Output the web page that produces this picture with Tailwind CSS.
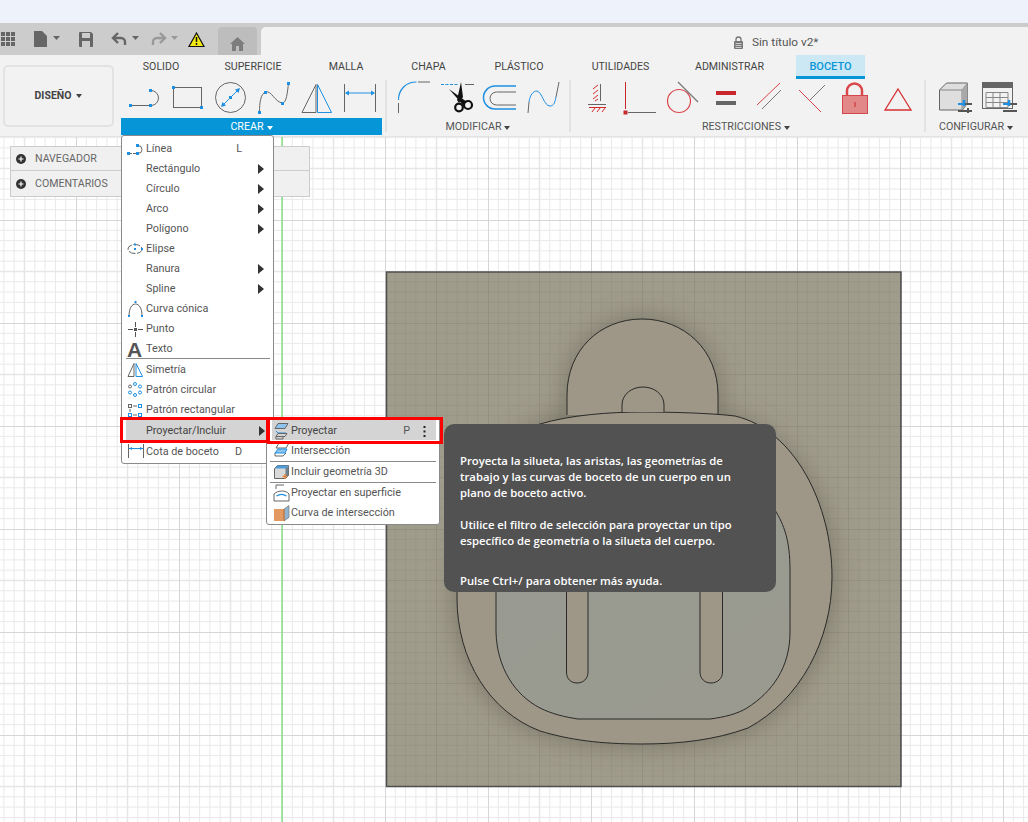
<!doctype html>
<html lang="es">
<head>
<meta charset="utf-8">
<script src="https://cdn.jsdelivr.net/npm/@tailwindcss/browser@4"></script>
</head>
<body>
<div class="relative flex h-[822px] w-[1028px] flex-col overflow-hidden bg-white font-['Roboto',sans-serif] text-[#444]">
  <div class="h-[23px] bg-[#eef2fb]"></div>
  <div class="h-[4px] bg-[#cccccc]"></div>

  <!-- title bar -->
  <div class="flex h-[28px] bg-[#cccccc]">
    <svg class="h-[28px] w-[218px]" viewBox="0 27 218 28">
      <g fill="#666">
        <rect x="1" y="32" width="4" height="4"/><rect x="6" y="32" width="4" height="4"/><rect x="11" y="32" width="4" height="4"/>
        <rect x="1" y="37" width="4" height="4"/><rect x="6" y="37" width="4" height="4"/><rect x="11" y="37" width="4" height="4"/>
        <rect x="1" y="42" width="4" height="4"/><rect x="6" y="42" width="4" height="4"/><rect x="11" y="42" width="4" height="4"/>
        <path d="M34 31h8l5 5v11H34z"/>
        <path d="M53 36h7l-3.500 4zM132 36h7l-3.500 4z"/>
        <path d="M79 33a1 1 0 0 1 1-1h11l2 2v12a1 1 0 0 1-1 1H80a1 1 0 0 1-1-1zM82 33v5h8v-5zM82 41v6h8v-6z" fill-rule="evenodd"/>
      </g>
      <path d="M114 38h7a4 4 0 0 1 4 4v3M118 33l-5 5 5 5" fill="none" stroke="#666" stroke-width="2.400"/>
      <path d="M164 38h-7a4 4 0 0 0-4 4v3M160 33l5 5-5 5" fill="none" stroke="#999" stroke-width="2.400"/>
      <path d="M171 36h7l-3.500 4z" fill="#999"/>
      <path d="M196.500 33 204 46.500h-15z" fill="#f4ea12" stroke="#111" stroke-width="1.200"/>
      <path d="M196.500 37v5M196.500 43v2" stroke="#111" stroke-width="1.500"/>
    </svg>
    <div class="flex h-[28px] w-[39px] items-center justify-center rounded-t-[4px] bg-[#bdbdbd]">
      <svg class="mt-[5px] h-[14px] w-[15px]" viewBox="0 0 15 14"><path d="M7.500 0 15 7h-2v7H9V9H6v5H2V7H0z" fill="#7d7d7d"/></svg>
    </div>
    <div class="ml-[4px] flex flex-1 items-center gap-[9px] rounded-tl-[5px] bg-[#f2f2f2] pl-[473px] pt-[2px]">
      <svg class="h-[13px] w-[9px]" viewBox="0 0 9 13"><path d="M2 6V3.500a2.500 2.500 0 0 1 5 0V6" fill="none" stroke="#777" stroke-width="1.300"/><rect y="5" width="9" height="8" rx="1" fill="#777"/><path d="M1.500 7.500h6M1.500 9.500h6M1.500 11.500h6" stroke="#f2f2f2" stroke-width=".7"/></svg>
      <span class="pt-[1px] text-[11.800px] leading-none text-[#555]">Sin título v2*</span>
    </div>
  </div>

  <!-- toolbar -->
  <div class="flex h-[82px] border-b border-[#e4e4e4] bg-[#f2f2f2]">
    <div class="ml-[3px] mt-[10px] flex h-[62px] w-[111px] items-center justify-center gap-[5px] rounded-[5px] border-2 border-[#e2e2e2] text-[10.500px] font-bold text-[#444]">
      DISEÑO
      <svg class="h-[4px] w-[6px]" viewBox="0 0 6 4"><path d="M0 0h6L3 4z" fill="#444"/></svg>
    </div>
    <div class="ml-[7px] flex flex-1 flex-col">
      <div class="flex h-[24px] text-[10.600px] text-[#444]">
        <div class="flex w-[80px] items-center justify-center">SOLIDO</div>
        <div class="flex w-[104px] items-center justify-center">SUPERFICIE</div>
        <div class="flex w-[82px] items-center justify-center">MALLA</div>
        <div class="flex w-[83px] items-center justify-center">CHAPA</div>
        <div class="flex w-[98px] items-center justify-center">PLÁSTICO</div>
        <div class="flex w-[105px] items-center justify-center">UTILIDADES</div>
        <div class="flex w-[113px] items-center justify-center">ADMINISTRAR</div>
        <div class="ml-[10px] flex w-[69px] items-center justify-center border-b-[3px] border-[#0696d7] bg-[#cce8f5] pt-[3px] text-[11px] font-medium text-[#0696d7]">BOCETO</div>
      </div>
      <div class="mt-[1px] flex">
        <div class="w-[261px]">
          <svg class="block h-[35px] w-[261px]" viewBox="121 80 261 35" fill="none">
            <path d="M131 105.500h19" stroke="#666"/>
            <path d="M151 90.500a7.500 7.500 0 0 1 0 15" stroke="#666"/>
            <g fill="#1e8fe1"><rect x="129" y="104" width="3" height="3"/><rect x="149" y="104" width="3" height="3"/><rect x="149" y="89" width="3" height="3"/></g>
            <rect x="173.500" y="87.500" width="28" height="20" stroke="#666"/>
            <g fill="#1e8fe1"><rect x="172" y="86" width="3" height="3"/><rect x="200" y="106" width="3" height="3"/></g>
            <circle cx="230.500" cy="97.500" r="15" stroke="#666"/>
            <path d="M222 106l17-17" stroke="#1e8fe1"/>
            <path d="M221 107l1.500-5 3.500 3.500zM240 88l-1.500 5-3.500-3.500z" fill="#1e8fe1"/>
            <rect x="229" y="96" width="3" height="3" fill="#1e8fe1"/>
            <path d="M259.500 112c0-9 1-18 6-20 6-2 9 10 17 11 4 0 5-11 6-20" stroke="#666"/>
            <g fill="#1e8fe1"><rect x="258" y="111" width="3" height="3"/><rect x="264" y="91" width="3" height="3"/><rect x="281" y="102" width="3" height="3"/><rect x="287" y="82" width="3" height="3"/></g>
            <path d="M302 112.500l14-28v28z" stroke="#666"/>
            <path d="M317.500 84.500l14 28h-14z" stroke="#1e8fe1"/>
            <path d="M344.500 84v28M375.500 84v28" stroke="#666"/>
            <path d="M346 93h28" stroke="#1e8fe1"/>
            <path d="M345 93l4-2.500v5zM375 93l-4-2.500v5z" fill="#1e8fe1"/>
          </svg>
          <div class="mt-[3px] flex h-[17px] items-center justify-center gap-[3px] bg-[#0696d7] pt-[2px] text-[10.700px] text-white">CREAR
            <svg class="h-[4px] w-[6px]" viewBox="0 0 6 4"><path d="M0 0h6L3 4z" fill="#fff"/></svg>
          </div>
        </div>
        <div class="ml-[3px] h-[52px] w-[2px] bg-[#e2e2e2]"></div>
        <div class="w-[182px]">
          <svg class="block h-[35px] w-[182px]" viewBox="387 80 182 35" fill="none">
            <path d="M398.500 100c0-10 7-18 18-18" stroke="#1e8fe1" stroke-width="1.200"/>
            <path d="M398.500 103v10M418 82h12" stroke="#666"/>
            <path d="M441 84.500h18" stroke="#1e8fe1" stroke-dasharray="3 1.500"/>
            <path d="M465 84.500h9" stroke="#666"/>
            <path d="M449 89l18 13-4 3zM461 82l2 15-4 6-2-3z" fill="#111"/>
            <circle cx="459" cy="107.500" r="3.800" stroke="#111" stroke-width="2.200"/>
            <circle cx="468" cy="105" r="4" stroke="#111" stroke-width="2.200"/>
            <path d="M516 86h-21a11.500 11.500 0 0 0 0 23h21" stroke="#1e8fe1" stroke-width="1.500"/>
            <path d="M516 92h-19.500a6.500 6.500 0 0 0 0 13h19.500" stroke="#666"/>
            <path d="M528 113l1-11M556 97l3-15" stroke="#666"/>
            <path d="M529 102c1-7 4-11 8-11 5 1 7 15 13 15 4 0 5-4 6-9" stroke="#1e8fe1"/>
          </svg>
          <div class="mt-[3px] flex h-[17px] items-center justify-center gap-[3px] pt-[2px] text-[10.700px] text-[#555]">MODIFICAR
            <svg class="h-[4px] w-[6px]" viewBox="0 0 6 4"><path d="M0 0h6L3 4z" fill="#444"/></svg>
          </div>
        </div>
        <div class="h-[52px] w-[2px] bg-[#e2e2e2]"></div>
        <div class="w-[353px]">
          <svg class="block h-[35px] w-[353px]" viewBox="571 80 353 35" fill="none">
            <path d="M600.500 84v17M588 104.500h18" stroke="#666"/>
            <path d="M598 85l-5 4M598 90l-5 4M598 95l-5 4M598 99l-3 2M592 112l3-4M597 112l3-4M602 112l3-4" stroke="#d02c2c"/>
            <path d="M589 107.500h17" stroke="#d02c2c"/>
            <path d="M625.500 82v27" stroke="#c8272b"/>
            <rect x="623.500" y="110.500" width="4" height="4" fill="#c8272b"/>
            <path d="M628 112.500h28" stroke="#666"/>
            <circle cx="679" cy="101" r="11.500" stroke="#d9474b" stroke-width="1.200"/>
            <path d="M678 82l20 20" stroke="#777" stroke-width="1.200"/>
            <rect x="716" y="91" width="20" height="4" fill="#c8272b"/>
            <rect x="716" y="101" width="20" height="4" fill="#666"/>
            <path d="M757 105l23-22" stroke="#d9474b"/>
            <path d="M762 109l19-19" stroke="#777"/>
            <path d="M799 90l22 22" stroke="#d9474b"/>
            <path d="M810 100l15-15" stroke="#777"/>
            <path d="M847 96v-5a7.500 7.500 0 0 1 15 0v5" stroke="#d9474b" stroke-width="2.500"/>
            <rect x="842.500" y="95.500" width="25" height="18" fill="#e28888" stroke="#d2494d"/>
            <path d="M855 102v5" stroke="#c8272b"/>
            <path d="M898 89l13 21h-26z" stroke="#d62f33" stroke-width="1.300"/>
          </svg>
          <div class="mt-[3px] flex h-[17px] items-center justify-center gap-[3px] pr-[3px] pt-[2px] text-[10.700px] text-[#555]">RESTRICCIONES
            <svg class="h-[4px] w-[6px]" viewBox="0 0 6 4"><path d="M0 0h6L3 4z" fill="#444"/></svg>
          </div>
        </div>
        <div class="h-[52px] w-[2px] bg-[#e2e2e2]"></div>
        <div class="w-[100px]">
          <svg class="block h-[35px] w-[100px]" viewBox="926 80 100 35" fill="none">
            <path d="M939.500 90l7-7h21v20l-5 7h-23z" fill="#dedede" stroke="#666"/>
            <path d="M939.500 90h22.500l5.500-7M962 90v20" stroke="#888"/>
            <path d="M962 90l5.500-7v20l-5.500 7z" fill="#a9a9a9"/>
            <path d="M958 104h14M958 111h14" stroke="#555" stroke-width="2"/>
            <path d="M964 100v6" stroke="#1e8fe1" stroke-width="2.500"/><path d="M958 104h6" stroke="#1e8fe1" stroke-width="2"/>
            <path d="M968 108v5" stroke="#555" stroke-width="2"/>
            <rect x="982.500" y="82.500" width="30" height="26" fill="#f2f2f2" stroke="#666"/>
            <rect x="982" y="82" width="31" height="6" fill="#666"/>
            <path d="M986 92.500h22v15h-22zM986 97.500h22M986 102.500h22M993 92v16M1000 92v16" stroke="#888"/>
            <path d="M1003 104h14M1003 111h14" stroke="#555" stroke-width="2"/>
            <path d="M1009 100v6" stroke="#1e8fe1" stroke-width="2.500"/><path d="M1003 104h6" stroke="#1e8fe1" stroke-width="2"/>
          </svg>
          <div class="mt-[3px] flex h-[17px] items-center justify-center gap-[3px] pt-[2px] text-[10.700px] text-[#555]">CONFIGURAR
            <svg class="h-[4px] w-[6px]" viewBox="0 0 6 4"><path d="M0 0h6L3 4z" fill="#444"/></svg>
          </div>
        </div>
      </div>
    </div>
  </div>

  <!-- canvas -->
  <div class="relative flex-1">
    <svg class="absolute inset-0 h-[685px] w-[1028px]" viewBox="0 137 1028 685">
      <defs>
        <pattern id="g" patternUnits="userSpaceOnUse" x="76" y="632" width="103" height="103">
          <g stroke="#e9e9e9" fill="none">
            <path d="M10.300 0v103M20.600 0v103M30.900 0v103M41.200 0v103M61.800 0v103M72.100 0v103M82.400 0v103M92.700 0v103"/>
            <path d="M0 10.300h103M0 20.600h103M0 30.900h103M0 41.200h103M0 61.800h103M0 72.100h103M0 82.400h103M0 92.700h103"/>
          </g>
          <path d="M51.500 0v103M0 51.500h103" stroke="#e6e6e6" stroke-width="1.500"/>
          <path d="M.5 0v103M0 .5h103" stroke="#d6d6d6"/>
        </pattern>
        <pattern id="h" patternUnits="userSpaceOnUse" x="76" y="632" width="103" height="103">
          <g stroke="#000" stroke-opacity=".04" fill="none">
            <path d="M10.300 0v103M20.600 0v103M30.900 0v103M41.200 0v103M61.800 0v103M72.100 0v103M82.400 0v103M92.700 0v103"/>
            <path d="M0 10.300h103M0 20.600h103M0 30.900h103M0 41.200h103M0 61.800h103M0 72.100h103M0 82.400h103M0 92.700h103"/>
          </g>
          <path d="M51.500 0v103M0 51.500h103M.5 0v103M0 .5h103" stroke="#000" stroke-opacity=".07"/>
        </pattern>
        <filter id="b" x="-30%" y="-30%" width="160%" height="160%"><feGaussianBlur stdDeviation="14"/></filter>
        <clipPath id="p"><rect x="387" y="272" width="514" height="514"/></clipPath>
        <linearGradient id="i" x1="0" y1="0" x2="1" y2="1"><stop offset="0" stop-color="#989a91"/><stop offset="1" stop-color="#9a9a8f"/></linearGradient>
      </defs>
      <rect y="137" width="1028" height="685" fill="#fff"/>
      <rect y="137" width="1028" height="685" fill="url(#g)"/>
      <path d="M282 137v685" stroke="#6fe06f" stroke-width="1.200"/>
      <rect x="386.500" y="272" width="514.500" height="514.500" fill="#a09c8c" stroke="#4e4e4e" stroke-width="1.500"/>
      <rect x="387" y="272" width="514" height="514" fill="url(#h)"/>
      <g clip-path="url(#p)">
        <path d="M567 415V395C567 350 600 319 642 319S718 350 718 395V415C790 426 832 505 832 577 832 640 800 700 748 728 715 740 680 744 642 744 600 744 570 740 540 731 490 712 457 660 457 598 457 520 480 440 567 415Z" fill="#4e4c3c" opacity=".5" filter="url(#b)"/>
      </g>
      <path d="M567 415V395C567 350 600 319 642 319S718 350 718 395V415" fill="#9e9787" stroke="#2a2a2a"/>
      <path d="M642 412C670 412 710 413 735 416 795 430 832 505 832 577 832 640 800 700 748 728 715 740 680 744 642 744 600 744 570 740 540 731 490 712 457 660 457 598 457 520 480 440 540 424 570 415 610 412 642 412Z" fill="#9e9787" stroke="#2a2a2a"/>
      <path d="M622 412V405C622 394 632 387 643 387S664 394 664 405V412" fill="#9e9787" stroke="#2a2a2a"/>
      <path d="M496 500V632C497 668 515 695 540 708 552 714 565 717 578 719H710C725 717 737 714 747 708 772 692 790 668 790 632V570C790 540 784 525 775 510L760 500Z" fill="url(#i)" stroke="#2a2a2a"/>
      <path d="M566.500 580V672C566.500 679 571 683 577 683S588 679 588 672V580ZM700 580V672C700 679 705 683 711 683S722.500 679 722.500 672V580Z" fill="#9e9787" stroke="#2a2a2a"/>
    </svg>

    <div class="absolute left-[10px] top-[9px] w-[300px] border border-[#cccccc] bg-[#f0f0f0] text-[10.600px] text-[#666]">
      <div class="flex h-[24px] items-center gap-[9px] border-b border-[#cccccc] pl-[5px]">
        <svg class="h-[10px] w-[10px]" viewBox="0 0 10 10"><circle cx="5" cy="5" r="5" fill="#333"/><path d="M5 2.500v5M2.500 5h5" stroke="#fff" stroke-width="1.200"/></svg>
        NAVEGADOR
      </div>
      <div class="flex h-[25px] items-center gap-[9px] pl-[5px]">
        <svg class="h-[10px] w-[10px]" viewBox="0 0 10 10"><circle cx="5" cy="5" r="5" fill="#333"/><path d="M5 2.500v5M2.500 5h5" stroke="#fff" stroke-width="1.200"/></svg>
        COMENTARIOS
      </div>
    </div>
  </div>

  <!-- create menu -->
  <div class="absolute left-[121px] top-[135px] w-[153px] rounded-[3px] border border-[#8a8a8a] bg-white py-[2px] text-[10.800px] text-[#555]">
    <div class="flex h-5 items-center pl-[4px] pt-[2px]">
      <svg class="h-[18px] w-5" viewBox="0 0 20 18" fill="none"><path d="M3 13.500h7" stroke="#666" stroke-dasharray="3 1"/><path d="M12 5.500a4 4 0 0 1 0 8" stroke="#666"/><g fill="#1e8fe1"><rect x="1" y="12" width="3" height="3"/><rect x="10" y="12" width="3" height="3"/><rect x="10" y="4" width="3" height="3"/></g></svg>
      <span class="flex-1">Línea</span><span class="mr-[31px]">L</span>
    </div>
    <div class="flex h-5 items-center pl-[24px] pt-[2px]"><span class="flex-1">Rectángulo</span><svg class="mr-[9px] h-[10px] w-[6px]" viewBox="0 0 6 10"><path d="M0 0l6 5-6 5z" fill="#333"/></svg></div>
    <div class="flex h-5 items-center pl-[24px] pt-[2px]"><span class="flex-1">Círculo</span><svg class="mr-[9px] h-[10px] w-[6px]" viewBox="0 0 6 10"><path d="M0 0l6 5-6 5z" fill="#333"/></svg></div>
    <div class="flex h-5 items-center pl-[24px] pt-[2px]"><span class="flex-1">Arco</span><svg class="mr-[9px] h-[10px] w-[6px]" viewBox="0 0 6 10"><path d="M0 0l6 5-6 5z" fill="#333"/></svg></div>
    <div class="flex h-5 items-center pl-[24px] pt-[2px]"><span class="flex-1">Polígono</span><svg class="mr-[9px] h-[10px] w-[6px]" viewBox="0 0 6 10"><path d="M0 0l6 5-6 5z" fill="#333"/></svg></div>
    <div class="flex h-5 items-center pl-[4px] pt-[2px]">
      <svg class="h-[18px] w-5" viewBox="0 0 20 18" fill="none"><ellipse cx="9" cy="9" rx="7" ry="4.500" stroke="#666" stroke-dasharray="7 1.500"/><g fill="#1e8fe1"><rect x="8" y="8" width="2" height="2"/><rect x="8" y="3.500" width="2" height="2"/><rect x="15" y="8" width="2" height="2"/></g></svg>
      <span>Elipse</span>
    </div>
    <div class="flex h-5 items-center pl-[24px] pt-[2px]"><span class="flex-1">Ranura</span><svg class="mr-[9px] h-[10px] w-[6px]" viewBox="0 0 6 10"><path d="M0 0l6 5-6 5z" fill="#333"/></svg></div>
    <div class="flex h-5 items-center pl-[24px] pt-[2px]"><span class="flex-1">Spline</span><svg class="mr-[9px] h-[10px] w-[6px]" viewBox="0 0 6 10"><path d="M0 0l6 5-6 5z" fill="#333"/></svg></div>
    <div class="flex h-5 items-center pl-[4px] pt-[2px]">
      <svg class="h-[18px] w-5" viewBox="0 0 20 18" fill="none"><path d="M3 16c0-8 3-12 6.500-12S16 8 16 16" stroke="#666"/><g fill="#1e8fe1"><rect x="2" y="15" width="2" height="2"/><rect x="15" y="15" width="2" height="2"/><rect x="8.500" y="1" width="2" height="2"/></g></svg>
      <span>Curva cónica</span>
    </div>
    <div class="flex h-5 items-center pl-[4px] pt-[2px]">
      <svg class="h-[18px] w-5" viewBox="0 0 20 18" fill="none"><path d="M2 9.500h5M12 9.500h5M9.500 2v5M9.500 12v5" stroke="#555"/><rect x="8" y="8" width="3" height="3" fill="#555"/></svg>
      <span>Punto</span>
    </div>
    <div class="flex h-5 items-center pl-[4px] pt-[2px]">
      <span class="w-5 pl-[1px] font-['Liberation_Sans',sans-serif] text-[21px] font-bold leading-none text-[#555]">A</span>
      <span>Texto</span>
    </div>
    <div class="ml-[4px] mr-[3px] h-px bg-[#8a8a8a]"></div>
    <div class="flex h-5 items-center pl-[4px] pt-[2px]">
      <svg class="h-[18px] w-5" viewBox="0 0 20 18" fill="none"><path d="M2 15.500l6-13v13z" stroke="#666"/><path d="M10 2.500l6.500 13H10z" stroke="#1e8fe1"/></svg>
      <span>Simetría</span>
    </div>
    <div class="flex h-5 items-center pl-[4px] pt-[2px]">
      <svg class="h-[18px] w-5" viewBox="0 0 20 18" fill="none" stroke-width="1"><circle cx="9" cy="3" r="1.500" stroke="#1e8fe1"/><circle cx="14" cy="5.500" r="1.500" stroke="#1e8fe1"/><circle cx="14" cy="11.500" r="1.500" stroke="#1e8fe1"/><circle cx="9" cy="14" r="1.500" stroke="#1e8fe1"/><circle cx="4" cy="11.500" r="1.500" stroke="#1e8fe1"/><circle cx="4" cy="5.500" r="1.500" stroke="#666"/></svg>
      <span>Patrón circular</span>
    </div>
    <div class="flex h-5 items-center pl-[4px] pt-[2px]">
      <svg class="h-[18px] w-5" viewBox="0 0 20 18" fill="none"><rect x="2.500" y="3.500" width="3" height="3" stroke="#666"/><rect x="12.500" y="3.500" width="3" height="3" stroke="#1e8fe1"/><rect x="2.500" y="12.500" width="3" height="3" stroke="#1e8fe1"/><rect x="12.500" y="12.500" width="3" height="3" stroke="#1e8fe1"/><path d="M7 5h4M7 14h4M4 8v3" stroke="#666"/></svg>
      <span>Patrón rectangular</span>
    </div>
    <div class="mt-px flex h-5 items-center pl-[24px] pt-[2px] ml-[4px] -mr-px bg-[#d4d4d4]">
      <span class="-ml-[4px] flex-1 text-[#444]">Proyectar/Incluir</span><svg class="mr-[9px] h-[10px] w-[6px]" viewBox="0 0 6 10"><path d="M0 0l6 5-6 5z" fill="#333"/></svg>
    </div>
    <div class="mt-px flex h-5 items-center pl-[4px] pt-[2px]">
      <svg class="h-[18px] w-5" viewBox="0 0 20 18" fill="none"><path d="M2.500 1v14M17.500 1v14" stroke="#666"/><path d="M3 5.500h14" stroke="#1e8fe1"/><path d="M3 5.500l3-1.500v3zM17 5.500l-3-1.500v3z" fill="#1e8fe1"/></svg>
      <span class="flex-1">Cota de boceto</span><span class="mr-[31px]">D</span>
    </div>
  </div>

  <!-- submenu -->
  <div class="absolute left-[266px] top-[418px] w-[174px] rounded-[3px] border border-[#8a8a8a] bg-white py-[1px] text-[10.800px] text-[#555]">
    <div class="ml-[5px] mr-[3px] flex h-5 items-center bg-[#d4d4d4] pt-[2px]">
      <svg class="ml-[1px] h-[18px] w-[18px]" viewBox="0 0 18 18" fill="none"><path d="M5 1.500h10l-3 5H2z" fill="#8cc4ee" stroke="#666"/><path d="M3 9l2 2h8" stroke="#1e8fe1"/><path d="M5 11.500h9l-2 3H3z" stroke="#666"/><path d="M3 14.500v2.500h7v-2.500" stroke="#666"/></svg>
      <span class="flex-1 text-[#444]">Proyectar</span><span class="mr-[13px]">P</span>
      <svg class="mr-[10px] h-[11px] w-[3px]" viewBox="0 0 3 11"><g fill="#222"><rect x=".5" width="2" height="2"/><rect x=".5" y="4.500" width="2" height="2"/><rect x=".5" y="9" width="2" height="2"/></g></svg>
    </div>
    <div class="mt-px flex h-5 items-center pl-[5px]">
      <svg class="ml-[1px] h-[18px] w-[18px]" viewBox="0 0 18 18" fill="none"><path d="M6 1h10l-3 5H3z" stroke="#666"/><path d="M5 7h9l-2 4H2z" fill="#8cc4ee" stroke="#1e8fe1"/><path d="M2 11v3h8l3-3" stroke="#666"/></svg>
      <span>Intersección</span>
    </div>
    <div class="ml-[3px] mr-[3px] h-px bg-[#8a8a8a]"></div>
    <div class="flex h-5 items-center pl-[5px]">
      <svg class="ml-[1px] h-[18px] w-[18px]" viewBox="0 0 18 18" fill="none"><path d="M1.500 5.500l3-3h11v10l-3 3h-11z" fill="#d9d9d9" stroke="#666"/><path d="M1.500 5.500l3-3h11l-3 3z" fill="#4d9bd8"/><path d="M12.500 5.500l3-3v10l-3 3z" fill="#6f7f8d"/><path d="M12 11v5M9.500 13.500h5" stroke="#e8843c" stroke-width="1.300"/></svg>
      <span>Incluir geometría 3D</span>
    </div>
    <div class="ml-[3px] mr-[3px] h-px bg-[#8a8a8a]"></div>
    <div class="flex h-5 items-center pl-[5px]">
      <svg class="ml-[1px] h-[20px] w-[18px]" viewBox="0 0 18 20" fill="none"><path d="M3 6V2h8" stroke="#666"/><path d="M1 11c4-4 12-4 15 0v7H1z" stroke="#666"/><path d="M3.500 13c3-2 7-2 10 0" stroke="#1e8fe1" stroke-width="1.300"/></svg>
      <span>Proyectar en superficie</span>
    </div>
    <div class="flex h-5 items-center pl-[5px]">
      <svg class="ml-[1px] h-[18px] w-[18px]" viewBox="0 0 18 18" fill="none"><rect x="1" y="5" width="10" height="12" fill="#e39a62"/><path d="M11 5l5-3.500v12L11 17z" fill="#8fb4cf" stroke="#777" stroke-width=".7"/><path d="M11 5v12" stroke="#d9722c"/></svg>
      <span>Curva de intersección</span>
    </div>
  </div>

  <!-- red callouts -->
  <div class="absolute left-[120px] top-[417px] h-[26px] w-[149px] border-[3px] border-[#ff0000]"></div>
  <div class="absolute left-[267px] top-[417px] h-[27px] w-[176px] border-[3px] border-[#ff0000]"></div>

  <!-- tooltip -->
  <div class="absolute left-[444px] top-[424px] h-[168px] w-[332px] rounded-[10px] bg-[#525252] px-4 pt-[29px] font-['Open_Sans',sans-serif] text-[11.300px] font-semibold leading-[16px] text-white">
    <p>Proyecta la silueta, las aristas, las geometrías de<br>trabajo y las curvas de boceto de un cuerpo en un<br>plano de boceto activo.</p>
    <p class="mt-4">Utilice el filtro de selección para proyectar un tipo<br>específico de geometría o la silueta del cuerpo.</p>
    <p class="mt-[24px]">Pulse Ctrl+/ para obtener más ayuda.</p>
  </div>
</div>
</body>
</html>
